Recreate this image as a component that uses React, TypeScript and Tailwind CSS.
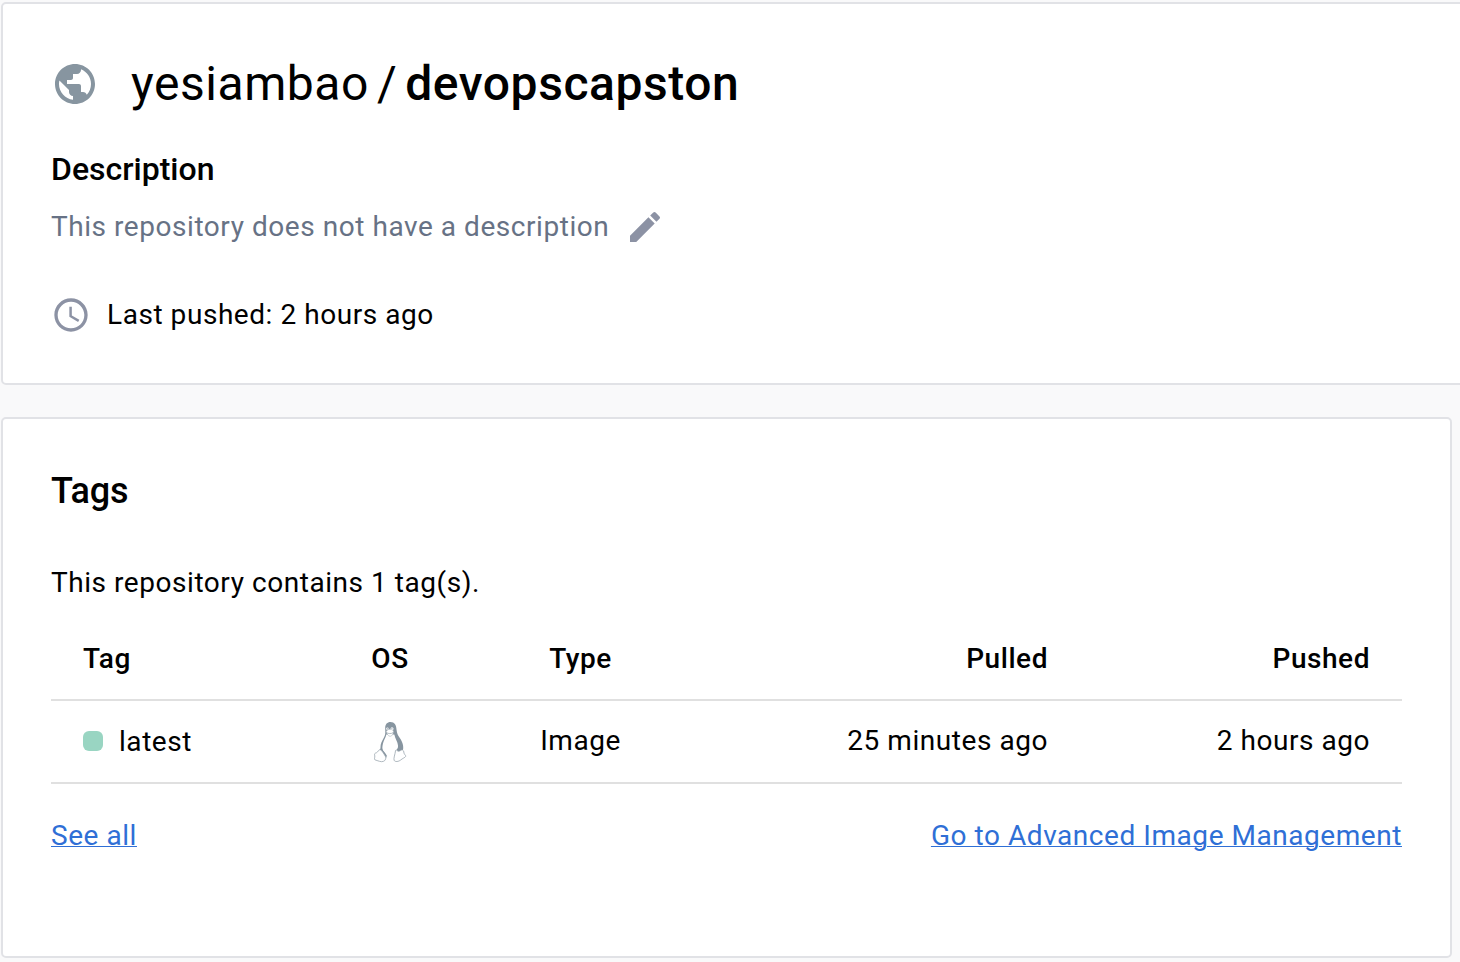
import { MdAccessTime, MdEdit, MdPublic } from "react-icons/md";

function LinuxIcon() {
  return (
    <svg width="34" height="42" viewBox="0 0 34 42" fill="none">
      <path
        fill="#8795a0"
        d="M17.500 1c-3.300 0-5.300 2.300-5.300 5.800 0 3 .4 4.800-.2 7.200-.8 3-3.700 6.300-4.300 9.800-.3 2 .1 3.600-.9 5.200l1.500 1.700 4.200 6.300h10.500l4.500-7.500 2.500-.5c1-4-.8-8.500-3.200-12-1.900-2.800-2.900-4.500-3.300-8.500C23.200 3.800 21.500 1 17.500 1Z"
      />
      <path
        fill="#fff"
        d="M13.300 13.500c-.3 2.500-1.900 4.500-2.700 7-.9 2.800-1.600 5.500-1 8.300.7 2.700 4 4.700 3.700 8.200h9.200c.8-2.500.2-5.500.9-7.500.7-1.800 1.900-2.200 1.600-5-.3-3.500-2.800-7-3.700-11Z"
      />
      <path
        fill="#fff"
        stroke="#9aa6af"
        strokeWidth=".5"
        d="M13.200 10.300c1.200-1.600 2.600-2 3.700-2 1.600 0 3.300.8 3.700 2-.2 2.800-1.600 5-3.400 5s-3.600-2.200-4-5Z"
      />
      <path stroke="#8795a0" strokeWidth=".6" d="M13.700 11.700c1.500 1 4.500 1.400 6.600-.2" />
      <ellipse cx="14.400" cy="7.800" rx="1.200" ry="1.300" fill="#fff" />
      <ellipse cx="19" cy="7.700" rx="1.500" ry="1.500" fill="#fff" />
      <path fill="#8795a0" d="M14.200 7.200h.9v1.200h-.9zM18.400 7.200h1v1.200h-1z" />
      <path stroke="#8795a0" strokeWidth="1.600" d="M8.200 28c1.600 3.200 3.900 4.300 5.200 7.600" />
      <path
        fill="#fff"
        stroke="#9aa6af"
        strokeWidth=".8"
        strokeLinejoin="round"
        d="M6.400 28.700c1.900-.2 3.100 2 4.300 4 1.100 1.700 2.500 3.200 2 5.200-.6 2.500-3.800 3.400-6.200 2.400-1.700-.7-3.300-.8-4.600-1.500-1-.7.100-2.200-.1-3.800-.2-1.300-.6-2.200.5-2.800 1.800-.4 2.700-1.900 4.100-3.500Z"
      />
      <path
        fill="#fff"
        stroke="#9aa6af"
        strokeWidth=".8"
        strokeLinejoin="round"
        d="M22.600 29.400c1.200-1 1.300.5 2.700.8 2 .2 3-1.800 4.300-1.200 1.800.9.800 2.900 1.900 4.200.8 1 1.500 1.500 1.100 2.300-.6 1.200-3.200 1.900-4.900 3.500-2 1.600-5.700 2.300-6.600.2-.7-1.900 1-5.800 1.500-9.800Z"
      />
    </svg>
  );
}

export default function App() {
  return (
    <main className="flex h-[962px] w-[1460px] flex-col gap-8 overflow-hidden bg-[#f9f9fa] pt-0.5 pl-px font-[Roboto,sans-serif] text-[28px] leading-10 tracking-[0.55px] text-black">
      <section className="h-[383px] w-[1480px] shrink-0 rounded-[5px] border-2 border-[#e1e2e6] bg-white px-12 pt-14">
        <div className="flex h-12 items-center">
          <MdPublic className="size-12 shrink-0 text-[#8795a0]" />
          <h1 className="ml-8 flex text-[48px] leading-[48px] tracking-[0.55px]">
            <span>yesiambao</span>
            <span className="mx-2">/</span>
            <span className="font-medium">devopscapston</span>
          </h1>
        </div>
        <h2 className="mt-[41px] text-[32px] leading-10 font-medium tracking-normal">Description</h2>
        <div className="mt-[18px] flex items-center">
          <p className="whitespace-nowrap text-[#677285]">This repository does not have a description</p>
          <MdEdit className="ml-4 size-10 text-[#8c92a4]" />
        </div>
        <div className="mt-12 flex items-center gap-4">
          <MdAccessTime className="size-10 text-[#8c92a4]" />
          <p>Last pushed: 2 hours ago</p>
        </div>
      </section>

      <section className="h-[541px] w-[1451px] shrink-0 rounded-[5px] border-2 border-[#e1e2e6] bg-white px-12 pt-[52px]">
        <h2 className="text-[36px] leading-10 font-medium tracking-[-0.1px]">Tags</h2>
        <p className="mt-[52px]">This repository contains 1 tag(s).</p>
        <table className="mt-4 w-[1351px] table-fixed border-separate border-spacing-0 [&_td]:border-b-2 [&_td]:border-[#e0e0e0] [&_th]:border-b-2 [&_th]:border-[#e0e0e0]">
          <colgroup>
            <col className="w-[288px]" />
            <col className="w-[102px]" />
            <col className="w-[279px]" />
            <col className="w-[360px]" />
            <col className="w-[322px]" />
          </colgroup>
          <thead>
            <tr className="h-[82px]">
              <th className="pl-8 text-left font-medium">Tag</th>
              <th className="font-medium">OS</th>
              <th className="font-medium">Type</th>
              <th className="pr-8 text-right font-medium">Pulled</th>
              <th className="pr-8 text-right font-medium">Pushed</th>
            </tr>
          </thead>
          <tbody>
            <tr className="h-[83px]">
              <td className="pl-8">
                <div className="flex items-center gap-4">
                  <span className="mb-0.5 size-5 rounded-md bg-[#99d5c2]" />
                  latest
                </div>
              </td>
              <td>
                <div className="flex justify-center">
                  <LinuxIcon />
                </div>
              </td>
              <td className="pb-0.5 text-center">Image</td>
              <td className="pr-8 pb-0.5 text-right">25 minutes ago</td>
              <td className="pr-8 pb-0.5 text-right">2 hours ago</td>
            </tr>
          </tbody>
        </table>
        <div className="mt-8 flex w-[1351px] justify-between text-[#2f6fd6]">
          <a href="#" className="underline decoration-1 underline-offset-1">See all</a>
          <a href="#" className="underline decoration-1 underline-offset-1">Go to Advanced Image Management</a>
        </div>
      </section>
    </main>
  );
}
